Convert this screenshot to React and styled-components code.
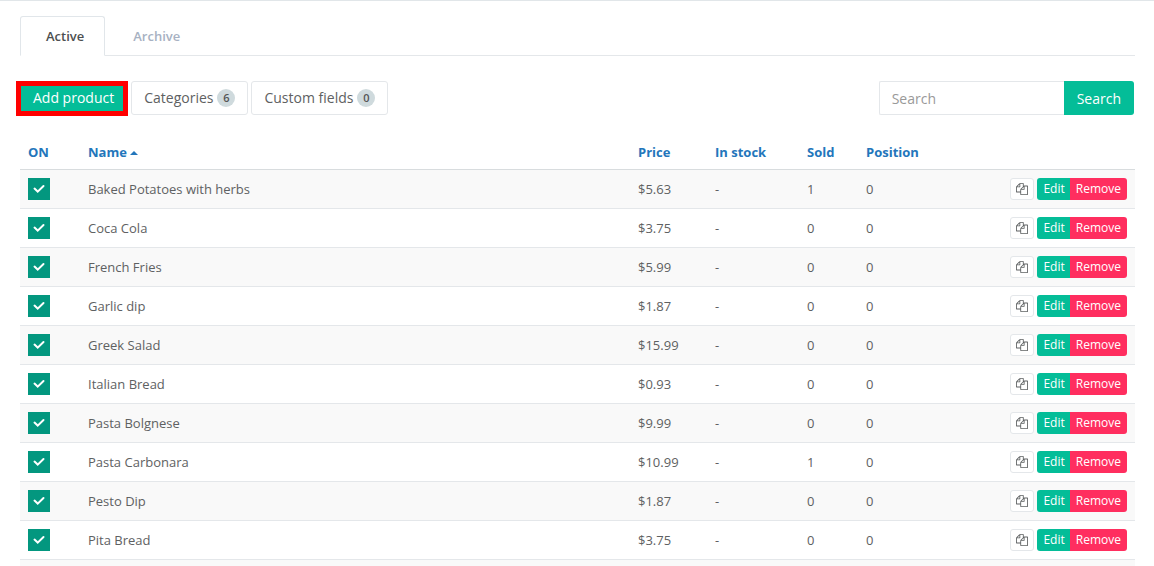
import React from "react";
import { useState } from "react";
import styled, { createGlobalStyle } from "styled-components";

const GlobalStyle = createGlobalStyle`
  * {
    box-sizing: border-box;
  }
  body {
    margin: 0;
    background: #fff;
    color: #5e6162;
    font: 13px/22px "Open Sans", "Noto Sans", sans-serif;
    -webkit-font-smoothing: antialiased;
  }
  button, input {
    font-family: inherit;
    margin: 0;
  }
`;

const Page = styled.main`
  padding: 15px 19px 0 20px;
  border-top: 1px solid #e1e6e9;
`;

const Tabs = styled.nav`
  display: flex;
  border-bottom: 1px solid #e4e7ea;
`;

const Tab = styled.a`
  padding: 8px ${p => p.$active ? "20px" : "27px"} 8px ${p => p.$active ? "25px" : "27px"};
  margin-bottom: -1px;
  border: 1px solid ${p => p.$active ? "#e1e6ea" : "transparent"};
  border-bottom-color: ${p => p.$active ? "#fff" : "transparent"};
  border-radius: 3px 3px 0 0;
  color: ${p => p.$active ? "#4c4f50" : "#a7b1c2"};
  font-weight: 600;
  text-decoration: none;
`;

const Toolbar = styled.div`
  display: flex;
  align-items: flex-start;
  gap: 3px;
  margin: 25px 1px 20px -4px;
`;

const ToolButton = styled.button`
  display: flex;
  align-items: center;
  gap: 4px;
  height: 34px;
  padding: 0 12px;
  border: 1px solid #e4e7ea;
  border-radius: 3px;
  background: #fff;
  color: #5e6162;
  font-size: 14px;
  line-height: 20px;
  white-space: nowrap;
`;

const AddButton = styled(ToolButton)`
  height: 35px;
  border: 5px solid #f00;
  border-radius: 0;
  padding: 0 9px 2px 12px;
  background: #04bd98;
  color: #fff;
`;

const Badge = styled.span`
  min-width: 18px;
  border-radius: 9px;
  background: #cfdadd;
  color: #555;
  font-size: 11px;
  font-weight: 600;
  line-height: 18px;
  text-align: center;
`;

const SearchForm = styled.form`
  display: flex;
  margin-left: auto;
`;

const SearchInput = styled.input`
  width: 185px;
  height: 34px;
  padding: 1px 12px 0;
  border: 1px solid #e4e7ea;
  border-right: 0;
  border-radius: 2px 0 0 2px;
  font-size: 14px;
  color: #5e6162;
  &::placeholder {
    color: #999;
  }
`;

const SearchButton = styled.button`
  height: 34px;
  padding: 0 13px;
  border: 0;
  border-radius: 0 3px 3px 0;
  background: #04bd98;
  color: #fff;
  font-size: 14px;
`;

const Table = styled.table`
  width: 100%;
  border-spacing: 0;
  table-layout: fixed;
`;

const Th = styled.th`
  width: ${p => p.$width};
  height: 33px;
  padding: 0 8px 2px;
  color: #2376bb;
  font-weight: 700;
  text-align: left;
  white-space: nowrap;
`;

const Caret = styled.span`
  display: inline-block;
  margin-left: 3px;
  vertical-align: 2px;
  border: 4px solid transparent;
  border-top: 0;
  border-bottom-color: #2376bb;
`;

const Row = styled.tr`
  &:nth-child(odd) {
    background: #f9f9f9;
  }
  &:first-child td {
    border-top-color: #d8dcde;
  }
`;

const Td = styled.td`
  padding: 8px;
  border-top: 1px solid #e4e7ea;
`;

const CheckLabel = styled.label`
  display: grid;
  width: 22px;
  height: 22px;
  > * {
    grid-area: 1 / 1;
    place-self: center;
  }
  svg {
    pointer-events: none;
  }
`;

const CheckInput = styled.input`
  appearance: none;
  width: 22px;
  height: 22px;
  background: #c5d0d4;
  &:checked {
    background: #03977f;
  }
`;

const Actions = styled.div`
  display: flex;
  justify-content: flex-end;
`;

const SmallButton = styled.button`
  height: 22px;
  padding: 0 6px;
  border: 0;
  border-radius: 0 3px 3px 0;
  background: #ff2e5f;
  color: #fff;
  font-size: 12px;
  line-height: 20px;
`;

const EditButton = styled(SmallButton)`
  padding-right: 5px;
  border-radius: 3px 0 0 3px;
  background: #04bd98;
`;

const CopyButton = styled.button`
  display: flex;
  align-items: center;
  justify-content: center;
  width: 24px;
  height: 22px;
  margin-right: 3px;
  padding: 0;
  border: 1px solid #e4e7ea;
  border-radius: 3px;
  background: #fff;
  color: #5e6162;
`;

const columns = [
  { title: "ON", width: "60px" },
  { title: "Name", width: "auto", sorted: true },
  { title: "Price", width: "77px" },
  { title: "In stock", width: "92px" },
  { title: "Sold", width: "59px" },
  { title: "Position", width: "132px" },
];

const products = [
  { name: "Baked Potatoes with herbs", price: "$5.63", sold: 1 },
  { name: "Coca Cola", price: "$3.75", sold: 0 },
  { name: "French Fries", price: "$5.99", sold: 0 },
  { name: "Garlic dip", price: "$1.87", sold: 0 },
  { name: "Greek Salad", price: "$15.99", sold: 0 },
  { name: "Italian Bread", price: "$0.93", sold: 0 },
  { name: "Pasta Bolgnese", price: "$9.99", sold: 0 },
  { name: "Pasta Carbonara", price: "$10.99", sold: 1 },
  { name: "Pesto Dip", price: "$1.87", sold: 0 },
  { name: "Pita Bread", price: "$3.75", sold: 0 },
];

function CopyIcon() {
  return (
    <svg width="12" height="12" viewBox="0 0 1792 1792" fill="currentColor" aria-hidden="true">
      <path d="M1696 384q40 0 68 28t28 68v1216q0 40-28 68t-68 28h-960q-40 0-68-28t-28-68v-288h-544q-40 0-68-28t-28-68v-672q0-40 20-88t48-76l408-408q28-28 76-48t88-20h416q40 0 68 28t28 68v328q68-40 128-40h416zm-544 213l-299 299h299v-299zm-640-384l-299 299h299v-299zm196 647l316-316v-416h-384v416q0 40-28 68t-68 28h-416v640h512v-256q0-40 20-88t48-76zm956 804v-1152h-384v416q0 40-28 68t-68 28h-416v640h896z" />
    </svg>
  );
}

function ProductRow({ product }) {
  const [on, setOn] = useState(true);

  return (
    <Row>
      <Td>
        <CheckLabel>
          <CheckInput type="checkbox" aria-label={product.name} checked={on} onChange={() => setOn(!on)} />
          { on &&
            <svg width="12" height="12" viewBox="0 0 12 12" fill="none" stroke="#fff" strokeWidth="2" strokeLinecap="round" aria-hidden="true">
              <path d="M1.5 5.6 4.7 8.6 10.5 3" />
            </svg>
          }
        </CheckLabel>
      </Td>
      <Td>{product.name}</Td>
      <Td>{product.price}</Td>
      <Td>-</Td>
      <Td>{product.sold}</Td>
      <Td>0</Td>
      <Td>
        <Actions>
          <CopyButton aria-label="Copy"><CopyIcon /></CopyButton>
          <EditButton>Edit</EditButton>
          <SmallButton>Remove</SmallButton>
        </Actions>
      </Td>
    </Row>
  );
}

function App() {
  const [search, setSearch] = useState("");

  return (
    <>
      <GlobalStyle />
      <Page>
        <Tabs>
          <Tab href="#active" $active>Active</Tab>
          <Tab href="#archive">Archive</Tab>
        </Tabs>

        <Toolbar>
          <AddButton>Add product</AddButton>
          <ToolButton>Categories <Badge>6</Badge></ToolButton>
          <ToolButton>Custom fields <Badge>0</Badge></ToolButton>
          <SearchForm onSubmit={(e) => e.preventDefault()}>
            <SearchInput aria-label="Search" placeholder="Search" value={search} onChange={(e) => setSearch(e.target.value)} />
            <SearchButton>Search</SearchButton>
          </SearchForm>
        </Toolbar>

        <Table>
          <thead>
            <tr>
              { columns.map((c) => (
                <Th key={c.title} $width={c.width}>{c.title}{ c.sorted && <Caret /> }</Th>
              ))}
              <Th $width="145px" aria-label="Actions" />
            </tr>
          </thead>
          <tbody>
            { products.map((p) => <ProductRow key={p.name} product={p} />) }
            <Row><Td colSpan={7} /></Row>
          </tbody>
        </Table>
      </Page>
    </>
  );
}

export default App;
